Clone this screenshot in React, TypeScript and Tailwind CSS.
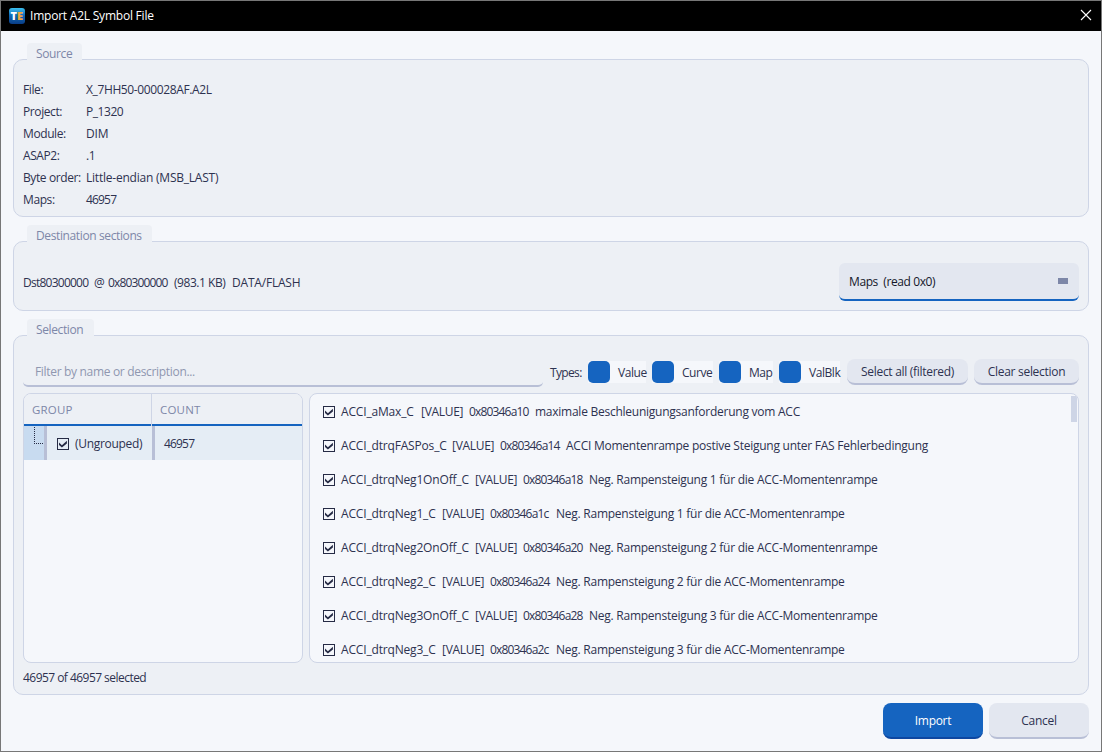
import type { ReactNode } from 'react';

const info = [
  { label: 'File:', value: 'X_7HH50-000028AF.A2L', tracking: 'tracking-[-0.38px]' },
  { label: 'Project:', value: 'P_1320', tracking: 'tracking-[-0.45px]' },
  { label: 'Module:', value: 'DIM', tracking: 'tracking-[-0.2px]' },
  { label: 'ASAP2:', value: '.1', tracking: 'tracking-[-0.3px]' },
  { label: 'Byte order:', value: 'Little-endian (MSB_LAST)', tracking: 'tracking-[-0.22px]' },
  { label: 'Maps:', value: '46957', tracking: 'tracking-[-0.82px]' },
];

const types = [
  { name: 'Value', width: 'w-[58px]' },
  { name: 'Curve', width: 'w-[61px]' },
  { name: 'Map', width: 'w-[54px]' },
  { name: 'ValBlk', width: 'w-[61px]' },
];

const symbols = [
  { name: 'ACCI_aMax_C', width: 'w-[74px]', address: '0x80346a10', description: 'maximale Beschleunigungsanforderung vom ACC' },
  { name: 'ACCI_dtrqFASPos_C', width: 'w-[105px]', address: '0x80346a14', description: 'ACCI Momentenrampe postive Steigung unter FAS Fehlerbedingung' },
  { name: 'ACCI_dtrqNeg1OnOff_C', width: 'w-[128px]', address: '0x80346a18', description: 'Neg. Rampensteigung 1 für die ACC-Momentenrampe' },
  { name: 'ACCI_dtrqNeg1_C', width: 'w-[95px]', address: '0x80346a1c', description: 'Neg. Rampensteigung 1 für die ACC-Momentenrampe' },
  { name: 'ACCI_dtrqNeg2OnOff_C', width: 'w-[128px]', address: '0x80346a20', description: 'Neg. Rampensteigung 2 für die ACC-Momentenrampe' },
  { name: 'ACCI_dtrqNeg2_C', width: 'w-[95px]', address: '0x80346a24', description: 'Neg. Rampensteigung 2 für die ACC-Momentenrampe' },
  { name: 'ACCI_dtrqNeg3OnOff_C', width: 'w-[128px]', address: '0x80346a28', description: 'Neg. Rampensteigung 3 für die ACC-Momentenrampe' },
  { name: 'ACCI_dtrqNeg3_C', width: 'w-[95px]', address: '0x80346a2c', description: 'Neg. Rampensteigung 3 für die ACC-Momentenrampe' },
];

const CheckBox = () => (
  <svg width="12" height="12" viewBox="0 0 12 12" className="shrink-0">
    <rect x="0.5" y="0.5" width="11" height="11" fill="none" stroke="#262b45" />
    <path d="M2 4.6 L4.9 7.2 L9.9 2.7 V5.4 L4.9 9.6 L2 7 Z" fill="#262b45" />
  </svg>
);

type GroupBoxProps = { title: string; titleWidth: string; className: string; children: ReactNode };

const GroupBox = ({ title, titleWidth, className, children }: GroupBoxProps) => (
  <section>
    <h2 className={`relative ml-3.5 h-[17px] -mb-px rounded-t-[4px] bg-[#edf0f5] pl-[9px] pt-[3px] leading-4 tracking-[-0.38px] text-[#7d87a8] ${titleWidth}`}>
      {title}
    </h2>
    <div className={`rounded-[10px] border border-[#ced5e6] bg-[#edf0f5] px-[9px] ${className}`}>{children}</div>
  </section>
);

const App = () => {
  return (
    <div className="flex h-[752px] w-[1102px] flex-col overflow-hidden border border-[#777777] bg-[#f5f7fb] font-['Open_Sans',sans-serif] text-xs tracking-[-0.3px] text-[#2d3250] whitespace-pre">
      <header className="flex h-[30px] shrink-0 items-center bg-black pl-2 pr-[9px] pb-px text-white">
        <svg width="16" height="16" viewBox="0 0 16 16" className="mr-[5px]">
          <defs>
            <linearGradient id="badge" x1="0" y1="0" x2="0" y2="1">
              <stop offset="0" stopColor="#3cc0ee" />
              <stop offset="0.45" stopColor="#0f6cb8" />
              <stop offset="1" stopColor="#0a3c86" />
            </linearGradient>
          </defs>
          <rect width="16" height="16" rx="3" fill="url(#badge)" />
          <text x="1.6" y="12" fontSize="11" fontWeight="800" fill="#ffffff" letterSpacing="0">T</text>
          <text x="7.9" y="12" fontSize="11" fontWeight="800" fill="#f0a83c" letterSpacing="0">E</text>
        </svg>
        <h1 className="grow pt-px tracking-[-0.22px]">Import A2L Symbol File</h1>
        <svg width="12" height="12" viewBox="0 0 12 12" stroke="#ffffff" strokeWidth="1.1" className="mb-px">
          <path d="M1 1 L11 11 M11 1 L1 11" />
        </svg>
      </header>

      <main className="flex flex-col gap-2 px-3 pt-3">
        <GroupBox title="Source" titleWidth="w-[55px]" className="h-[158px] pt-[19px]">
          {info.map((row) => (
            <div key={row.label} className="flex h-[22px] items-center">
              <span className="w-[63px] tracking-[-0.4px]">{row.label}</span>
              <span className={row.tracking}>{row.value}</span>
            </div>
          ))}
        </GroupBox>

        <GroupBox title="Destination sections" titleWidth="w-[125px]" className="flex h-[70px] items-center justify-between pt-3">
          <p className="flex pt-0.5 tracking-[-0.75px]">
            <span className="w-[71px]">Dst80300000</span>
            <span className="w-3.5">@</span>
            <span className="w-[66px] tracking-[-0.85px]">0x80300000</span>
            <span className="w-[58px] tracking-[-0.45px]">(983.1 KB)</span>
            <span className="tracking-[-0.2px]">DATA/FLASH</span>
          </p>
          <button className="-mt-px flex h-[38px] w-60 items-center justify-between rounded-md border-b-2 border-[#1564c0] bg-[#e3e7f0] pl-2.5 pr-[11px] text-[#14172b]">
            <span className="pt-0.5 tracking-[-0.4px]">{'Maps  (read 0x0)'}</span>
            <span className="h-1.5 w-2.5 bg-[#7d87a8]" />
          </button>
        </GroupBox>

        <GroupBox title="Selection" titleWidth="w-[67px]" className="h-[360px] pt-[23px]">
          <div className="flex h-7 items-start">
            <input
              className="h-7 w-[520px] rounded-[5px] border-b-2 border-[#b8bfd6] bg-[#edf0f5] pb-0.5 pl-3 tracking-[-0.32px] outline-none placeholder:text-[#8f97b0]"
              placeholder="Filter by name or description..."
            />
            <span className="ml-[7px] w-[38px] leading-[27px] tracking-[-0.65px]">Types:</span>
            <div className="mt-0.5 flex gap-1.5">
              {types.map((type) => (
                <label key={type.name} className={`flex h-[22px] items-center bg-[#f5f7fb] pt-px tracking-[-0.45px] ${type.width}`}>
                  <span className="-mt-px mr-2 size-[22px] shrink-0 rounded-[5px] bg-[#1564c0]" />
                  {type.name}
                </label>
              ))}
            </div>
            <button className="ml-[7px] h-[26px] w-[121px] rounded-lg border-b-2 border-[#b8bfd6] bg-[#e3e7f0] pt-px">Select all (filtered)</button>
            <button className="ml-1.5 h-[26px] w-[105px] rounded-lg border-b-2 border-[#b8bfd6] bg-[#e3e7f0] pt-px">Clear selection</button>
          </div>

          <div className="mt-1.5 flex h-[270px] gap-1.5">
            <div className="w-[280px] overflow-hidden rounded-lg border border-[#ced5e6] bg-[#f5f7fb]">
              <div className="flex h-8 bg-[#edf0f5] leading-[31px] text-[11.5px] tracking-[0.2px] text-[#7d87a8]">
                <span className="w-[127px] border-b-2 border-[#1564c0] pl-2">GROUP</span>
                <span className="w-px bg-[#ced5e6]" />
                <span className="grow border-b-2 border-[#1564c0] pl-2">COUNT</span>
              </div>
              <div className="flex h-[34px] items-center bg-[#e5edf5]">
                <div className="h-full w-[23px] border-r-[3px] border-[#b8bfd6] bg-[#c8dbf0]">
                  <div className="ml-2.5 mt-px h-[17px] w-[9px] border-b border-l border-dotted border-[#262b45]" />
                </div>
                <div className="flex h-full w-[108px] items-center gap-1.5 border-r-[3px] border-[#b8bfd6] pl-2.5 pt-px">
                  <CheckBox />
                  <span>(Ungrouped)</span>
                </div>
                <span className="pl-[9px] pt-px tracking-[-0.82px]">46957</span>
              </div>
            </div>

            <div className="flex h-full w-[770px] overflow-hidden rounded-lg border border-[#ced5e6] bg-[#f5f7fb] pt-px">
              <ul className="grow">
                {symbols.map((symbol) => (
                  <li key={symbol.name} className="flex h-[34px] items-center gap-1.5 pl-[13px]">
                    <CheckBox />
                    <span className={`tracking-[-0.17px] ${symbol.width}`}>{symbol.name}</span>
                    <span className="w-[42px]">[VALUE]</span>
                    <span className="w-[60px] tracking-[-0.83px]">{symbol.address}</span>
                    <span className="tracking-[-0.25px]">{symbol.description}</span>
                  </li>
                ))}
              </ul>
              <div className="mr-px mt-px h-[26px] w-1.5 bg-[#ced5e6]" />
            </div>
          </div>
          <p className="mt-[7px] leading-4 tracking-[-0.54px]">46957 of 46957 selected</p>
        </GroupBox>

        <footer className="flex justify-end gap-1.5">
          <button className="h-9 w-[100px] rounded-lg border-b-2 border-[#0d47a1] bg-[#1564c0] pt-px text-white">Import</button>
          <button className="h-9 w-[100px] rounded-lg border-b-2 border-[#b8bfd6] bg-[#e3e7f0] pt-px">Cancel</button>
        </footer>
      </main>
    </div>
  );
};

export default App;
